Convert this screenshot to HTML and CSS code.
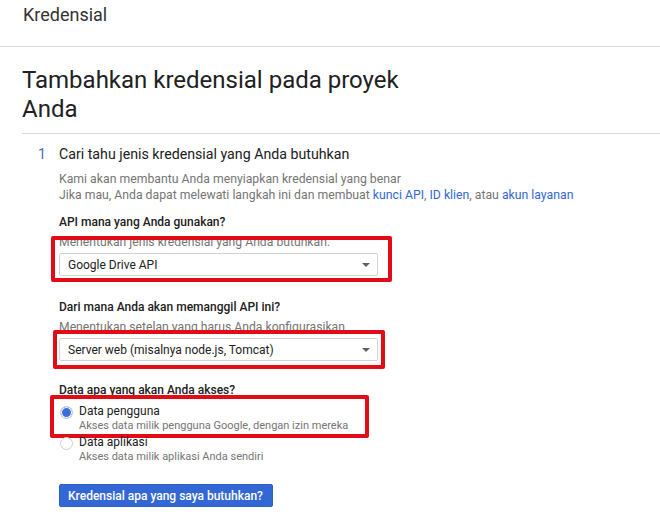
FILE: index.html
```html
<!DOCTYPE html>
<html lang="id">
<head>
    <meta charset="UTF-8">
    <meta name="viewport" content="width=device-width, initial-scale=1.0">
    <title>Kredensial</title>
    <link rel="stylesheet" href="styles.css">
</head>
<body>

    <!-- Header bar -->
    <div class="topbar">Kredensial</div>

    <div class="page">
        <h1 class="page-title">Tambahkan kredensial pada proyek Anda</h1>

        <div class="step">
            <div class="step-head">
                <span class="step-num">1</span>
                <span class="step-title">Cari tahu jenis kredensial yang Anda butuhkan</span>
            </div>

            <div class="step-body">
                <p class="desc">
                    Kami akan membantu Anda menyiapkan kredensial yang benar<br>
                    Jika mau, Anda dapat melewati langkah ini dan membuat <a href="#">kunci API</a>, <a href="#">ID klien</a>, atau <a href="#">akun layanan</a>
                </p>

                <!-- API yang dipakai -->
                <div class="label">API mana yang Anda gunakan?</div>
                <div class="field">
                    <div class="hint">Menentukan jenis kredensial yang Anda butuhkan.</div>
                    <div class="select">
                        <span>Google Drive API</span>
                        <span class="caret"></span>
                    </div>
                    <div class="mark mark-api"></div>
                </div>

                <!-- Dari mana API dipanggil -->
                <div class="label label-gap">Dari mana Anda akan memanggil API ini?</div>
                <div class="field">
                    <div class="hint">Menentukan setelan yang harus Anda konfigurasikan</div>
                    <div class="select">
                        <span>Server web (misalnya node.js, Tomcat)</span>
                        <span class="caret"></span>
                    </div>
                    <div class="mark mark-server"></div>
                </div>

                <!-- Data yang diakses -->
                <div class="label label-gap2">Data apa yang akan Anda akses?</div>
                <div class="options">
                    <div class="option">
                        <span class="radio checked"></span>
                        <div>
                            <div class="option-title">Data pengguna</div>
                            <div class="option-desc">Akses data milik pengguna Google, dengan izin mereka</div>
                        </div>
                        <div class="mark mark-data"></div>
                    </div>
                    <div class="option">
                        <span class="radio"></span>
                        <div>
                            <div class="option-title">Data aplikasi</div>
                            <div class="option-desc">Akses data milik aplikasi Anda sendiri</div>
                        </div>
                    </div>
                </div>

                <button class="btn">Kredensial apa yang saya butuhkan?</button>
            </div>
        </div>
    </div>

</body>
</html>
```

FILE: styles.css
```css
body {
    margin: 0;
    font-family: Roboto, "Liberation Sans", Arial, sans-serif;
    color: #212121;
    background: #fff;
}

.topbar {
    height: 47px;
    box-sizing: border-box;
    padding: 5px 0 0 23px;
    font-size: 18px;
    line-height: 20px;
    color: #333;
    border-bottom: 1px solid #dadada;
}

.page {
    padding-left: 22px;
}

.page-title {
    max-width: 420px;
    margin: 19px 0 0;
    padding-bottom: 9px;
    font-size: 24px;
    font-weight: 400;
    line-height: 29px;
    color: #212121;
}

.step {
    border-top: 1px solid #dadada;
    padding-top: 10px;
}

.step-head {
    display: flex;
    padding-left: 16px;
    font-size: 14.2px;
    line-height: 20px;
}

.step-num {
    width: 21px;
    color: #4a6ea9;
}

.step-body {
    padding-left: 37px;
    font-size: 12px;
    line-height: 16px;
}

.desc {
    margin: 8px 0 0;
    font-size: 12.25px;
    color: #757575;
    line-height: 15.5px;
}

.desc a {
    color: #3367d6;
    text-decoration: none;
}

.label {
    margin-top: 11px;
    font-weight: 500;
    color: #212121;
}

.label-gap {
    margin-top: 23px;
}

.label-gap2 {
    margin-top: 21px;
}

.field {
    position: relative;
    width: 319px;
    margin-top: 4px;
}

.hint {
    font-size: 12.2px;
    color: #757575;
}

.select {
    display: flex;
    justify-content: space-between;
    align-items: center;
    height: 23px;
    margin-top: 3px;
    padding: 0 7px 0 8px;
    box-sizing: border-box;
    border: 1px solid #d3d3d3;
    border-radius: 2px;
    background: #fff;
    color: #212121;
}

.caret {
    width: 0;
    height: 0;
    border-left: 4px solid transparent;
    border-right: 4px solid transparent;
    border-top: 4px solid #5f5f5f;
}

/* kotak merah penanda */
.mark {
    position: absolute;
    border: 4px solid #e20c16;
    border-radius: 2px;
    box-sizing: border-box;
}

.mark-api {
    left: -8px;
    width: 341px;
    top: 2px;
    bottom: -6px;
}

.mark-server {
    left: -6px;
    width: 332px;
    top: 11px;
    bottom: -8px;
}

.mark-data {
    left: -9px;
    width: 319px;
    top: -8px;
    bottom: -5px;
}

.options {
    margin-top: 5px;
}

.option {
    position: relative;
    display: flex;
    align-items: flex-start;
    gap: 6px;
}

.option + .option {
    margin-top: 1px;
}

.radio {
    width: 13px;
    height: 13px;
    margin: 3px 0 0 1px;
    box-sizing: border-box;
    border: 1px solid #cfcfcf;
    border-radius: 50%;
    background: #fff;
    flex-shrink: 0;
}

.radio.checked {
    border-color: #c4cfe6;
    background: #3b6fd6;
    box-shadow: inset 0 0 0 1px #fff;
}

.option-title {
    color: #212121;
}

.option-desc {
    font-size: 11px;
    line-height: 14px;
    color: #757575;
}

.btn {
    display: block;
    height: 23px;
    margin-top: 20px;
    padding: 0 9px 0 8px;
    font-family: Roboto, "Liberation Sans", Arial, sans-serif;
    font-size: 12px;
    font-weight: 500;
    color: #fff;
    background: #3367d6;
    border: 1px solid #2f5fc4;
    border-radius: 2px;
    cursor: pointer;
}
```
